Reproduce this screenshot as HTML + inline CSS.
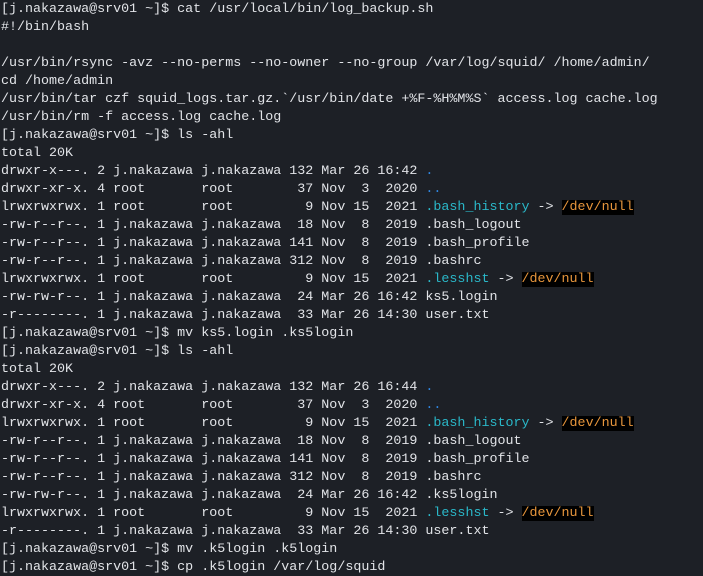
<!DOCTYPE html>
<html><head><meta charset="utf-8"><style>
html,body{margin:0;padding:0;background:#1d2026;width:703px;height:576px;overflow:hidden}
pre{margin:0;padding:1px 0 0 1px;font-family:"Liberation Mono",monospace;font-size:13.35px;letter-spacing:0;line-height:18px;color:#e2e4e8}
.c{color:#2ab8c9}.b{color:#2f86e0}.o{color:#e8963c;background:#000}
</style></head><body><pre>[j.nakazawa@srv01 ~]$ cat /usr/local/bin/log_backup.sh
#!/bin/bash

/usr/bin/rsync -avz --no-perms --no-owner --no-group /var/log/squid/ /home/admin/
cd /home/admin
/usr/bin/tar czf squid_logs.tar.gz.`/usr/bin/date +%F-%H%M%S` access.log cache.log
/usr/bin/rm -f access.log cache.log
[j.nakazawa@srv01 ~]$ ls -ahl
total 20K
drwxr-x---. 2 j.nakazawa j.nakazawa 132 Mar 26 16:42 <span class="b">.</span>
drwxr-xr-x. 4 root       root        37 Nov  3  2020 <span class="b">..</span>
lrwxrwxrwx. 1 root       root         9 Nov 15  2021 <span class="c">.bash_history</span> -&gt; <span class="o">/dev/null</span>
-rw-r--r--. 1 j.nakazawa j.nakazawa  18 Nov  8  2019 .bash_logout
-rw-r--r--. 1 j.nakazawa j.nakazawa 141 Nov  8  2019 .bash_profile
-rw-r--r--. 1 j.nakazawa j.nakazawa 312 Nov  8  2019 .bashrc
lrwxrwxrwx. 1 root       root         9 Nov 15  2021 <span class="c">.lesshst</span> -&gt; <span class="o">/dev/null</span>
-rw-rw-r--. 1 j.nakazawa j.nakazawa  24 Mar 26 16:42 ks5.login
-r--------. 1 j.nakazawa j.nakazawa  33 Mar 26 14:30 user.txt
[j.nakazawa@srv01 ~]$ mv ks5.login .ks5login
[j.nakazawa@srv01 ~]$ ls -ahl
total 20K
drwxr-x---. 2 j.nakazawa j.nakazawa 132 Mar 26 16:44 <span class="b">.</span>
drwxr-xr-x. 4 root       root        37 Nov  3  2020 <span class="b">..</span>
lrwxrwxrwx. 1 root       root         9 Nov 15  2021 <span class="c">.bash_history</span> -&gt; <span class="o">/dev/null</span>
-rw-r--r--. 1 j.nakazawa j.nakazawa  18 Nov  8  2019 .bash_logout
-rw-r--r--. 1 j.nakazawa j.nakazawa 141 Nov  8  2019 .bash_profile
-rw-r--r--. 1 j.nakazawa j.nakazawa 312 Nov  8  2019 .bashrc
-rw-rw-r--. 1 j.nakazawa j.nakazawa  24 Mar 26 16:42 .ks5login
lrwxrwxrwx. 1 root       root         9 Nov 15  2021 <span class="c">.lesshst</span> -&gt; <span class="o">/dev/null</span>
-r--------. 1 j.nakazawa j.nakazawa  33 Mar 26 14:30 user.txt
[j.nakazawa@srv01 ~]$ mv .k5login .k5login
[j.nakazawa@srv01 ~]$ cp .k5login /var/log/squid
</pre></body></html>
